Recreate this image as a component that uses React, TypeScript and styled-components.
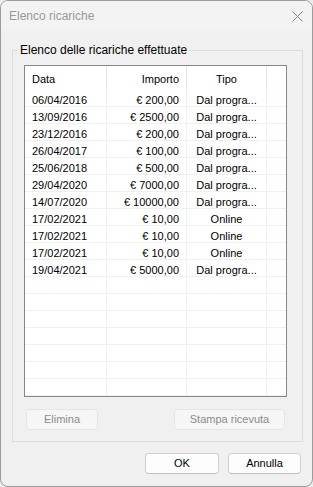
import styled, { createGlobalStyle } from 'styled-components';

const GlobalStyle = createGlobalStyle`
  html, body {
    margin: 0;
    padding: 0;
    background: #ececec;
  }
  * {
    box-sizing: border-box;
  }
`;

const FONT = `'Liberation Sans', Arial, sans-serif`;

const Window = styled.div`
  width: 313px;
  height: 487px;
  border: 1px solid #9c9c9c;
  border-radius: 8px;
  overflow: hidden;
  background: #f0f0f0;
  display: flex;
  flex-direction: column;
  font-family: ${FONT};
  font-size: 11px;
  color: #000;
`;

const TitleBar = styled.div`
  height: 30px;
  flex: none;
  display: flex;
  align-items: center;
  justify-content: space-between;
  padding: 0 4px 0 8px;
  background: #f3f3f3;
`;

const Title = styled.span`
  font-size: 12px;
  color: #9a9a9a;
`;

const CloseButton = styled.span`
  display: flex;
  width: 22px;
  height: 22px;
  align-items: center;
  justify-content: center;
`;

const Body = styled.div`
  flex: 1;
  display: flex;
  flex-direction: column;
  padding: 12px 9px 0 11px;
`;

const Group = styled.fieldset`
  margin: 0;
  padding: 0;
  border: 1px solid #dcdcdc;
  min-width: 0;
`;

const Legend = styled.legend`
  margin-left: 5px;
  padding: 0 2px;
  font-size: 12px;
  line-height: 14px;
  color: #000;
`;

const GroupContent = styled.div`
  padding: 8px 15px 11px 11px;
  display: flex;
  flex-direction: column;
`;

const List = styled.div`
  border: 1px solid #828790;
  background: #fff;
  height: 332px;
  overflow: hidden;
`;

const Row = styled.div<{ $header?: boolean }>`
  display: grid;
  grid-template-columns: 82px 80px 80px 1fr;
  height: ${(p) => (p.$header ? '24px' : '17px')};
  border-bottom: ${(p) => (p.$header ? 'none' : '1px solid #f0f0f0')};
`;

const Cell = styled.div<{ $align?: 'left' | 'right' | 'center'; $header?: boolean }>`
  display: flex;
  align-items: flex-start;
  justify-content: ${(p) =>
    p.$align === 'right' ? 'flex-end' : p.$align === 'center' ? 'center' : 'flex-start'};
  padding-left: ${(p) => (!p.$align || p.$align === 'left' ? '7px' : '0')};
  padding-right: ${(p) => (p.$align === 'right' ? '7px' : '0')};
  padding-top: ${(p) => (p.$header ? '7px' : '4px')};
  line-height: 13px;
  white-space: nowrap;
  overflow: hidden;
  border-right: 1px solid ${(p) => (p.$header ? '#e5e5e5' : '#f0f0f0')};

  &:last-child {
    border-right: none;
  }
`;

const GroupButtons = styled.div`
  display: flex;
  justify-content: space-between;
  padding: 0 2px;
  margin-top: 12px;
`;

const Button = styled.button<{ $width: number }>`
  width: ${(p) => p.$width}px;
  height: 21px;
  padding: 0;
  border: 1px solid ${(p) => (p.disabled ? '#e6e6e6' : '#d0d0d0')};
  border-bottom-color: ${(p) => (p.disabled ? '#e6e6e6' : '#c0c0c0')};
  border-radius: 4px;
  background: ${(p) => (p.disabled ? '#f6f6f6' : '#fdfdfd')};
  color: ${(p) => (p.disabled ? '#8c8c8c' : '#000')};
  font-family: ${FONT};
  font-size: 11px;
  line-height: 19px;
`;

const Footer = styled.div`
  display: flex;
  justify-content: flex-end;
  gap: 9px;
  padding: 11px 2px 0 0;
`;

type Ricarica = { data: string; importo: string; tipo: string };

const ricariche: Ricarica[] = [
  { data: '06/04/2016', importo: '€ 200,00', tipo: 'Dal progra...' },
  { data: '13/09/2016', importo: '€ 2500,00', tipo: 'Dal progra...' },
  { data: '23/12/2016', importo: '€ 200,00', tipo: 'Dal progra...' },
  { data: '26/04/2017', importo: '€ 100,00', tipo: 'Dal progra...' },
  { data: '25/06/2018', importo: '€ 500,00', tipo: 'Dal progra...' },
  { data: '29/04/2020', importo: '€ 7000,00', tipo: 'Dal progra...' },
  { data: '14/07/2020', importo: '€ 10000,00', tipo: 'Dal progra...' },
  { data: '17/02/2021', importo: '€ 10,00', tipo: 'Online' },
  { data: '17/02/2021', importo: '€ 10,00', tipo: 'Online' },
  { data: '17/02/2021', importo: '€ 10,00', tipo: 'Online' },
  { data: '19/04/2021', importo: '€ 5000,00', tipo: 'Dal progra...' },
];

const TOTAL_ROWS = 18;

function CloseIcon() {
  return (
    <svg width="11" height="11" viewBox="0 0 11 11">
      <path d="M0.5 0.5 L10.5 10.5 M10.5 0.5 L0.5 10.5" stroke="#8a8a8a" strokeWidth="1" />
    </svg>
  );
}

export default function App() {
  const empty = TOTAL_ROWS - ricariche.length;

  return (
    <>
      <GlobalStyle />
      <Window>
        <TitleBar>
          <Title>Elenco ricariche</Title>
          <CloseButton>
            <CloseIcon />
          </CloseButton>
        </TitleBar>
        <Body>
          <Group>
            <Legend>Elenco delle ricariche effettuate</Legend>
            <GroupContent>
              <List role="table">
                <Row $header role="row">
                  <Cell $header>Data</Cell>
                  <Cell $header $align="right">Importo</Cell>
                  <Cell $header $align="center">Tipo</Cell>
                  <Cell $header />
                </Row>
                {ricariche.map((r, i) => (
                  <Row key={i} role="row">
                    <Cell>{r.data}</Cell>
                    <Cell $align="right">{r.importo}</Cell>
                    <Cell $align="center">{r.tipo}</Cell>
                    <Cell />
                  </Row>
                ))}
                {Array.from({ length: empty }).map((_, i) => (
                  <Row key={`e${i}`} role="row">
                    <Cell />
                    <Cell />
                    <Cell />
                    <Cell />
                  </Row>
                ))}
              </List>
              <GroupButtons>
                <Button $width={72} disabled>
                  Elimina
                </Button>
                <Button $width={111} disabled>
                  Stampa ricevuta
                </Button>
              </GroupButtons>
            </GroupContent>
          </Group>
          <Footer>
            <Button $width={74}>OK</Button>
            <Button $width={73}>Annulla</Button>
          </Footer>
        </Body>
      </Window>
    </>
  );
}
